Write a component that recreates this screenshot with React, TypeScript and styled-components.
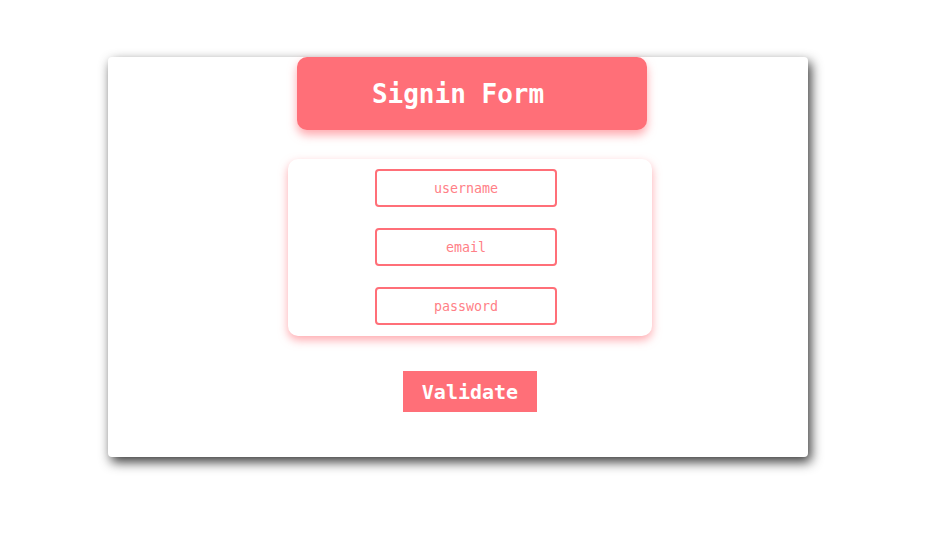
import React from "react";
import styled, { createGlobalStyle } from "styled-components";

const accent = "#ff6f78";

const Global = createGlobalStyle`
  html, body { margin: 0; padding: 0; background: #fff; }
  body { font-family: "DejaVu Sans Mono", monospace; }
  input::placeholder { color: #ff7f87; opacity: 1; }
`;

const Page = styled.div`
  padding: 57px 0 0 108px;
  min-height: 555px;
  box-sizing: border-box;
`;

const Card = styled.div`
  width: 700px;
  height: 400px;
  background: #fff;
  border-radius: 4px;
  box-shadow: 3px 5px 12px rgba(0, 0, 0, 0.78);
  display: flex;
  flex-direction: column;
  align-items: flex-start;
`;

const Header = styled.div`
  margin-left: 189px;
  width: 350px;
  height: 73px;
  box-sizing: border-box;
  padding-right: 28px;
  background: ${accent};
  border-radius: 10px;
  box-shadow: 0 5px 10px rgba(255, 111, 120, 0.6);
  display: flex;
  align-items: center;
  justify-content: center;
`;

const Title = styled.h1`
  margin: 0;
  font-family: "DejaVu Sans Mono", monospace;
  font-weight: bold;
  font-size: 26px;
  color: #fff;
`;

const FormBox = styled.form`
  margin: 29px 0 0 180px;
  width: 364px;
  box-sizing: border-box;
  padding: 10px 0 11px 87px;
  background: #fff;
  border-radius: 10px;
  box-shadow: 0 4px 10px rgba(255, 111, 120, 0.6);
  display: flex;
  flex-direction: column;
  gap: 21px;
`;

const Field = styled.input`
  width: 182px;
  height: 38px;
  box-sizing: border-box;
  border: 2px solid ${accent};
  border-radius: 4px;
  background: #fff;
  font-family: "DejaVu Sans Mono", monospace;
  font-size: 13.333px;
  color: ${accent};
  text-align: center;
  outline: none;
  padding: 0;
`;

const Button = styled.button`
  margin: 35px 0 0 295px;
  width: 134px;
  height: 41px;
  border: none;
  border-radius: 0;
  background: ${accent};
  color: #fff;
  font-family: "DejaVu Sans Mono", monospace;
  font-weight: bold;
  font-size: 20px;
  padding: 0;
  cursor: pointer;
`;

export default function App() {
  return (
    <>
      <Global />
      <Page>
        <Card>
          <Header>
            <Title>Signin Form</Title>
          </Header>
          <FormBox onSubmit={(e) => e.preventDefault()}>
            <Field placeholder="username" />
            <Field placeholder="email" />
            <Field placeholder="password" type="password" />
          </FormBox>
          <Button type="button">Validate</Button>
        </Card>
      </Page>
    </>
  );
}
